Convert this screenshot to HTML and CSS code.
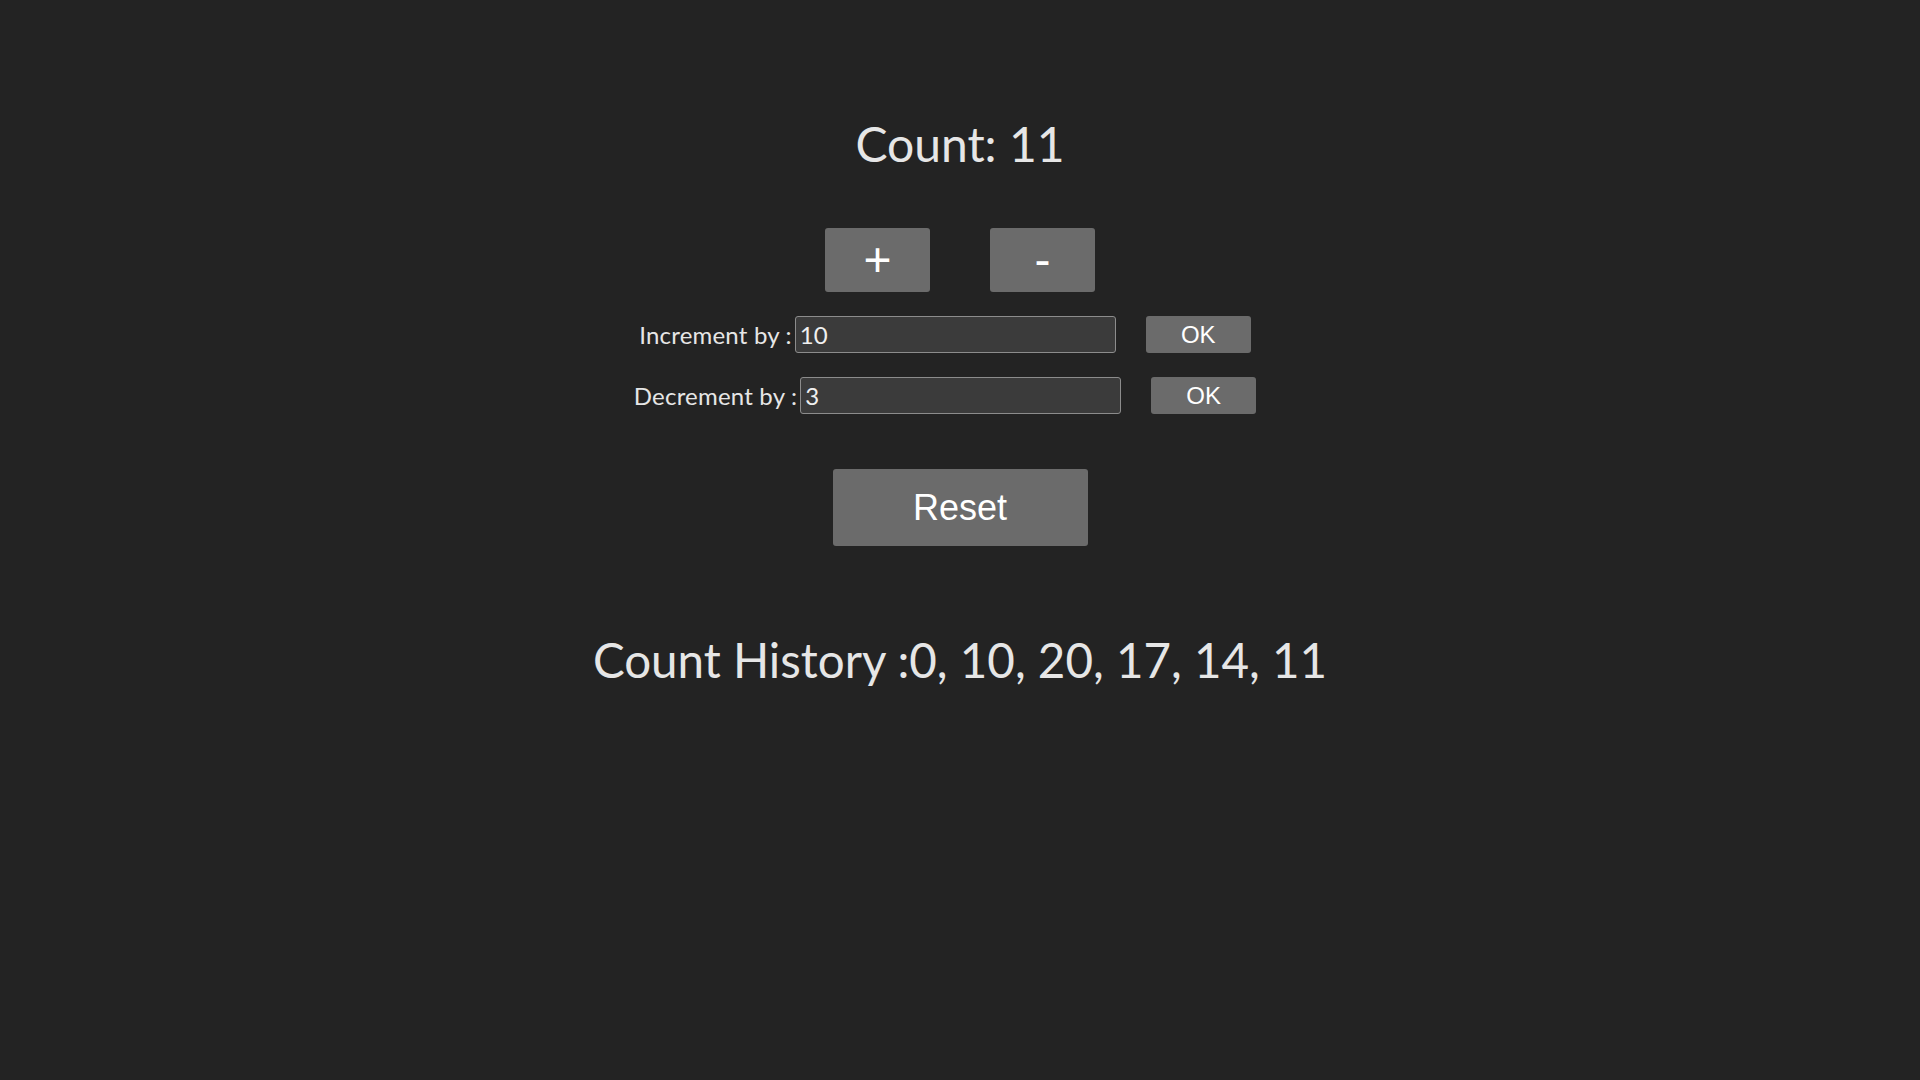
FILE: index.html
```html
<!DOCTYPE html>
<html lang="en">
<head>
<meta charset="utf-8">
<title>Counter</title>
<link rel="stylesheet" href="styles.css">
</head>
<body>
<main class="app">
  <h1 class="count">Count: 11</h1>
  <div class="pm-row">
    <button class="btn btn-pm">+</button>
    <button class="btn btn-pm">-</button>
  </div>
  <div class="step-row">
    <label class="step-label">Increment by :</label>
    <input class="step-input" type="text" value="10">
    <button class="btn btn-ok">OK</button>
  </div>
  <div class="step-row step-row-second">
    <label class="step-label">Decrement by :</label>
    <input class="step-input" type="text" value="3">
    <button class="btn btn-ok">OK</button>
  </div>
  <div class="reset-row">
    <button class="btn btn-reset">Reset</button>
  </div>
  <h2 class="history">Count History :0, 10, 20, 17, 14, 11</h2>
</main>
</body>
</html>
```
FILE: styles.css
```css
html, body {
  margin: 0;
  padding: 0;
  background: #232323;
  height: 100%;
}

body {
  font-family: "Lato", "Open Sans", sans-serif;
  color: #e6e6e6;
}

.app {
  display: flex;
  flex-direction: column;
  align-items: center;
  padding-top: 116px;
}

.count {
  margin: 0;
  font-size: 48px;
  font-weight: 400;
  line-height: 56px;
}

.btn {
  background: #6b6b6b;
  color: #ffffff;
  border: none;
  border-radius: 3px;
  font-family: "Liberation Sans", Arial, sans-serif;
  padding: 0;
  display: flex;
  align-items: center;
  justify-content: center;
}

.pm-row {
  display: flex;
  gap: 60px;
  margin-top: 56px;
}

.btn-pm {
  width: 105px;
  height: 64px;
  font-size: 48px;
  line-height: 1;
}

.step-row {
  display: flex;
  align-items: center;
  margin-top: 24px;
}

.step-label {
  font-size: 24px;
  letter-spacing: 0.2px;
  color: #e6e6e6;
}

.step-input {
  box-sizing: border-box;
  width: 321px;
  height: 37px;
  margin: 0 0 0 3px;
  padding: 0 4px;
  background: #3b3b3b;
  border: 1px solid #8c8c8c;
  border-radius: 3px;
  color: #f0f0f0;
  font-family: "Lato", "Open Sans", sans-serif;
  font-size: 24px;
  outline: none;
}

.btn-ok {
  width: 105px;
  height: 37px;
  margin: 0 30px;
  font-size: 24px;
}

.reset-row {
  margin-top: 55px;
}

.btn-reset {
  width: 255px;
  height: 77px;
  font-size: 36px;
}

.history {
  margin: 86px 0 0;
  font-size: 47.5px;
  font-weight: 400;
  line-height: 56px;
}
```
